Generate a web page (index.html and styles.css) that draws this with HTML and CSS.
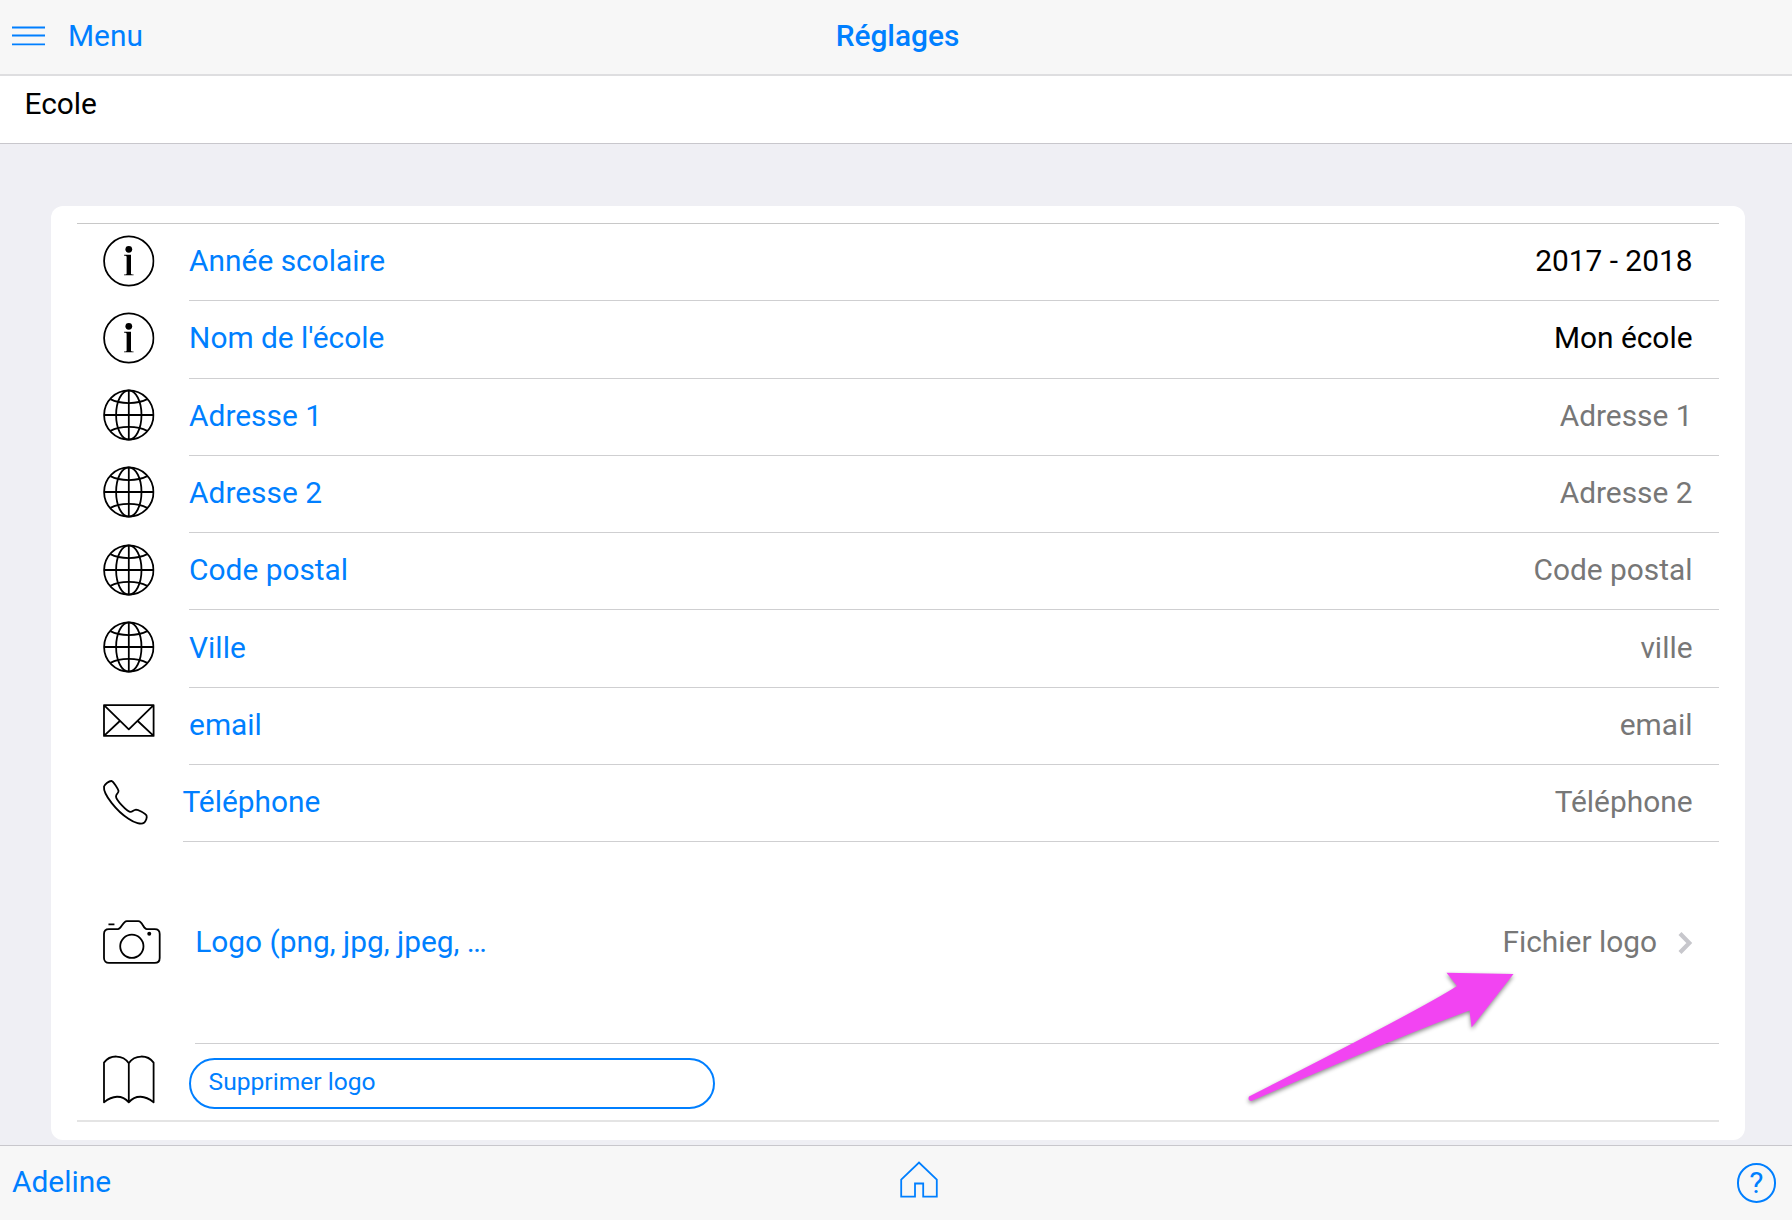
FILE: index.html
```html
<!DOCTYPE html>
<html lang="fr">
<head>
<meta charset="utf-8">
<title>Réglages</title>
<link rel="stylesheet" href="styles.css">
</head>
<body>
<svg class="defs" aria-hidden="true">
  <symbol id="info" viewBox="0 0 52 52">
    <circle cx="26" cy="26" r="24.9" fill="none" stroke="#000" stroke-width="1.8"/>
    <circle cx="26" cy="14.2" r="3.4"/>
    <path d="M21.300 19.800h6.900v18.700c0 .6.4.9 2.600 1v.8h-9.600v-.8c2.200-.1 2.600-.4 2.600-1V21.700c0-.7-.4-1-2.500-1.100z"/>
  </symbol>
  <symbol id="globe" viewBox="0 0 52 52">
    <g fill="none" stroke="#000" stroke-width="1.8">
      <circle cx="26" cy="26" r="24.9"/>
      <path d="M26 1v50M1 26h50"/>
      <ellipse cx="26" cy="26" rx="12.8" ry="24.9"/>
      <path d="M7.500 10C17 15.300 35 15.300 44.500 10M7.500 42C17 36.700 35 36.700 44.500 42"/>
    </g>
  </symbol>
</svg>

<header class="navbar">
  <a class="menu">
    <svg class="burger" viewBox="0 0 33 20"><path d="M0 1.500h33M0 9.500h33M0 18.300h33"/></svg>
    <span>Menu</span>
  </a>
  <h1>Réglages</h1>
</header>
<div class="subtitle">Ecole</div>

<main>
  <section class="card">
    <ul class="list">
      <li><svg class="icon"><use href="#info"/></svg><div class="inner"><label>Année scolaire</label><span class="value">2017 - 2018</span></div></li>
      <li><svg class="icon"><use href="#info"/></svg><div class="inner"><label>Nom de l'école</label><span class="value">Mon école</span></div></li>
      <li><svg class="icon"><use href="#globe"/></svg><div class="inner"><label>Adresse 1</label><span class="value empty">Adresse 1</span></div></li>
      <li><svg class="icon"><use href="#globe"/></svg><div class="inner"><label>Adresse 2</label><span class="value empty">Adresse 2</span></div></li>
      <li><svg class="icon"><use href="#globe"/></svg><div class="inner"><label>Code postal</label><span class="value empty">Code postal</span></div></li>
      <li><svg class="icon"><use href="#globe"/></svg><div class="inner"><label>Ville</label><span class="value empty">ville</span></div></li>
      <li>
        <svg class="icon mail" viewBox="0 0 52 33"><path d="M1 1h50v31H1zM1 1l25 24.500L51 1M1 32l16.500-15.500M51 32L34.500 16.500"/></svg>
        <div class="inner"><label>email</label><span class="value empty">email</span></div>
      </li>
      <li>
        <svg class="icon phone" viewBox="0 0 45 45"><path d="M1 6.500C2 4 6 .8 8.500 1c1.800.3 6.500 8 7 9.800.3 2.200-2.500 3.200-2.500 5.700 0 3.500 10.500 14.500 14 15.300 2.500.4 3.500-2 6-2.200 2 0 9.500 3.900 10.500 5.900.8 2-.5 5.500-2.500 7.300-2.500 2-9.500.2-15.500-4C14 31.500 0 14.500 1 6.500z"/></svg>
        <div class="inner"><label>Téléphone</label><span class="value empty">Téléphone</span></div>
      </li>
      <li class="logo">
        <svg class="icon camera" viewBox="0 0 58 44"><path d="M6 9h9c3 0 4-5 7-7.200.5-.5 1-.8 2-.8h11.500c1 0 1.500.3 2 .8C40.500 4 41 9 44 9h8c3 0 5 2 5 5v24c0 3-2 5-5 5H6c-3 0-5-2-5-5V14c0-3 2-5 5-5zM5.500 4.300h6"/><circle cx="29" cy="26.300" r="11.700"/><circle class="dot" cx="46.500" cy="13.800" r="2"/></svg>
        <div class="inner"><label>Logo (png, jpg, jpeg, …</label><span class="value empty">Fichier logo</span><svg class="chevron" viewBox="0 0 15 22"><path d="M2 1.500L11.300 11 2 20.500"/></svg></div>
      </li>
      <li class="last">
        <svg class="icon book" viewBox="0 0 52 49"><path d="M26 8C20-.8 7-.8 1 7.500v40c8.500-7 18-8 25 0 7-8 16.500-7 25 0v-40C45-.8 32-.8 26 8zM26 8v39"/></svg>
        <div class="inner"><a class="button">Supprimer logo</a></div>
      </li>
    </ul>
  </section>
</main>

<footer class="toolbar">
  <a class="user">Adeline</a>
  <svg class="home" viewBox="0 0 38 37"><path d="M1.200 18.700L19 1.500l17.800 17.200v17H23.200V22.500H15v13.200H1.200z"/></svg>
  <a class="help"><span>?</span></a>
</footer>

<svg class="arrow" viewBox="0 0 275 140"><path d="M4 104.500Q2.300 108.500 6.500 109Q150 46 224.500 18.500L226.600 35.500L268.500-18L201.500-19.300L212-6Q180 15 4 104.500z"/></svg>
</body>
</html>
```
FILE: styles.css
```css
* { box-sizing: border-box; }
body {
  margin: 0;
  height: 1220px;
  overflow: hidden;
  display: flex;
  flex-direction: column;
  background: #efeff4;
  color: #000;
  font-family: Roboto, sans-serif;
  font-size: 29.87px;
  line-height: 40px;
}
.defs { display: none; }
.navbar {
  flex: none;
  height: 76px;
  display: grid;
  grid-template-columns: 1fr auto 1fr;
  align-items: center;
  padding: 0 9px 2px 12px;
  background: #f7f7f7;
  border-bottom: 2px solid #dedee0;
  color: #007fff;
}
.menu { display: flex; align-items: center; gap: 23px; }
.burger { width: 33px; height: 20px; stroke: #007fff; stroke-width: 1.8; }
h1 { margin: 0; font-size: inherit; font-weight: 500; }
.subtitle {
  flex: none;
  height: 68px;
  padding: 8px 24.500px;
  background: #fff;
  border-bottom: 1px solid #c8c7cc;
}
main { flex: 1; padding: 61.500px 47px 5px 51px; }
.card {
  height: 934px;
  padding: 17.500px 26px 0;
  background: #fff;
  border-radius: 12px;
}
.list {
  margin: 0;
  padding: 0 0 0 26px;
  list-style: none;
}
.list::before, .list::after {
  content: "";
  display: block;
  height: 1px;
  margin-left: -26px;
  background: #c8c8c8;
}
.list::after { height: 2px; background: #e4e4e4; }
li { display: flex; height: 77.300px; }
.icon {
  flex: none;
  width: 51.600px;
  height: 52px;
  margin: 10.500px 34.500px 0 0;
  overflow: visible;
}
.mail, .phone, .camera, .book {
  fill: none;
  stroke: #000;
  stroke-width: 1.8;
  stroke-linejoin: round;
}
.mail { height: 33px; margin-top: 16px; }
.phone { width: 45px; height: 45px; margin-top: 14.500px; }
.camera { width: 57.700px; height: 44px; margin-top: 77.500px; }
.book { height: 49px; }
.dot { fill: #000; stroke: none; }
.inner {
  flex: 1;
  display: flex;
  align-items: center;
  padding: 0 26.500px 2px 0;
  border-bottom: 1px solid #cfcfd1;
}
label { flex: 1; color: #007fff; }
.empty { color: #777; }
.logo { height: 202px; }
.chevron { width: 15px; height: 22px; margin: 3px 0 0 20.500px; fill: none; stroke: #c7c7cc; stroke-width: 4.2; }
.last { height: 76px; }
.last .inner { border: 0; padding-bottom: 0; }
.button {
  width: 526px;
  height: 51px;
  margin-top: 3px;
  padding-left: 17.500px;
  border: 2px solid #007fff;
  border-radius: 26px;
  color: #007fff;
  font-size: 24.6px;
  line-height: 44px;
}
.toolbar {
  flex: none;
  height: 76px;
  display: grid;
  grid-template-columns: 1fr auto 1fr;
  align-items: center;
  padding: 0 16px 0 12px;
  background: #f7f7f7;
  border-top: 1px solid #c8c7cc;
  color: #007fff;
}
.user { margin-bottom: 2px; }
.home { width: 38px; height: 37px; margin: 0 0 7px 50px; fill: none; stroke: #007fff; stroke-width: 1.8; }
.help {
  justify-self: end;
  width: 39.500px;
  height: 39.500px;
  border: 2px solid #007fff;
  border-radius: 50%;
  text-align: center;
  line-height: 36px;
}
.arrow {
  position: absolute;
  left: 1245px;
  top: 992px;
  width: 275px;
  height: 140px;
  overflow: visible;
  fill: #f244f2;
  filter: drop-shadow(0 2px 2px rgba(0, 0, 0, .45));
}
```
